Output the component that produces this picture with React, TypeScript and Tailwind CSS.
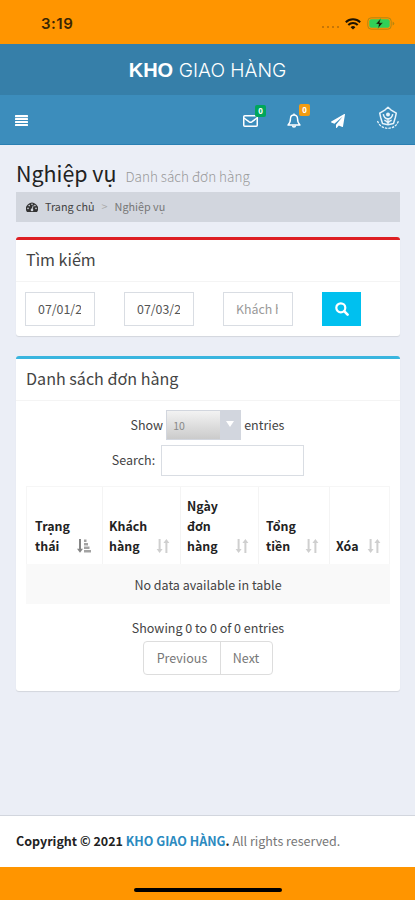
import type { ReactNode } from 'react'

const columns = [
  { lines: ['Trạng', 'thái'], width: 'w-[76px] pl-[8px] pr-[11px]', sorted: true },
  { lines: ['Khách', 'hàng'], width: 'w-[78px] pl-[6px] pr-[10px]', sorted: false },
  { lines: ['Ngày', 'đơn', 'hàng'], width: 'w-[78px] pl-[6px] pr-[9px]', sorted: false },
  { lines: ['Tổng', 'tiền'], width: 'w-[71px] pl-[7px] pr-[10px]', sorted: false },
  { lines: ['Xóa'], width: 'w-[61px] pl-[6px] pr-[10px]', sorted: false },
]

function StatusBar() {
  return (
    <div className="flex h-11 items-center bg-[#ff9500] pl-[41px] pr-[20px] pt-[3px]">
      <span className="flex-1 font-['Inter'] text-[15px] font-semibold leading-5 tracking-[0.5px] text-[#3a2604]">3:19</span>
      <div className="mr-[6px] mt-[7px] flex gap-[3px]">
        <i className="size-[2px] rounded-full bg-[#b56c08]" />
        <i className="size-[2px] rounded-full bg-[#b56c08]" />
        <i className="size-[2px] rounded-full bg-[#b56c08]" />
        <i className="size-[2px] rounded-full bg-[#b56c08]" />
      </div>
      <svg className="mr-[6px] h-[12px] w-[16px]" viewBox="0 0 16 12" fill="none" stroke="#1c1302" strokeWidth="2">
        <path d="M.8 4.3a10.3 10.3 0 0 1 14.4 0M3.3 7a6.7 6.7 0 0 1 9.4 0" />
        <path d="M8 11.6 5.6 9.2a3.4 3.4 0 0 1 4.8 0z" fill="#1c1302" stroke="none" />
      </svg>
      <svg className="h-[13px] w-[28px]" viewBox="0 0 28 13">
        <rect x=".8" y=".8" width="23.4" height="11.4" rx="3.4" fill="none" stroke="#b4860f" strokeWidth="1" />
        <rect x="2.3" y="2.3" width="20.4" height="8.4" rx="2" fill="#30d158" />
        <path d="M25.6 4.4q1.7.7 1.7 2.1t-1.7 2.1z" fill="#b4860f" />
        <path d="M13.7 1.4 8.8 7.1h3l-.9 4.5 5-5.8h-3.2z" fill="#1c1302" stroke="#30d158" strokeWidth=".5" />
      </svg>
    </div>
  )
}

function NavIcon({ children, badge, color }: { children: ReactNode; badge?: string; color?: string }) {
  return (
    <div className="relative flex w-[44px] justify-center">
      {children}
      {badge && (
        <span
          className={`absolute -top-[9px] left-[27px] flex h-[12px] w-[11px] items-center justify-center rounded-[2px] font-['Noto_Sans'] text-[8px] font-bold leading-none text-white ${color}`}
        >
          {badge}
        </span>
      )}
    </div>
  )
}

function Navbar() {
  return (
    <nav className="flex h-[50px] items-center border-b border-[#2a7fb2] bg-[#3c8dbc] pl-[15px] pt-[2px]">
      <svg className="h-[11px] w-[13px]" viewBox="0 0 13 11" fill="#fff">
        <rect width="13" height="2.2" rx=".5" />
        <rect y="3" width="13" height="2.1" rx=".5" />
        <rect y="6" width="13" height="2.1" rx=".5" />
        <rect y="8.9" width="13" height="2.1" rx=".5" />
      </svg>
      <div className="ml-auto flex items-center">
        <NavIcon badge="0" color="bg-[#00a65a]">
          <svg className="mt-px h-[12px] w-[15px]" viewBox="0 0 15 12" fill="none" stroke="#fff" strokeWidth="1.5">
            <rect x=".75" y=".75" width="13.5" height="10.500" rx="1" />
            <path d="M1 3 6.200 6.800q1.300.9 2.600 0L14 3" />
          </svg>
        </NavIcon>
        <NavIcon badge="0" color="bg-[#f39c12]">
          <svg className="h-[15px] w-[14px]" viewBox="0 0 14 15" fill="none" stroke="#fff" strokeWidth="1.4">
            <path d="M7 2C4.8 2 3.5 3.7 3.5 5.6c0 3.4-.9 5-2.5 6.4h12c-1.6-1.4-2.5-3-2.5-6.4C10.5 3.7 9.2 2 7 2z" strokeLinejoin="round" />
            <path d="M7 .4V2M5.5 12.5a1.5 1.5 0 0 0 3 0" />
          </svg>
        </NavIcon>
        <NavIcon>
          <svg className="h-[14px] w-[14px]" viewBox="0 0 1792 1792" fill="#fff">
            <path d="M1764 11q33 24 27 64l-256 1536q-5 29-32 45-14 8-31 8-11 0-24-5l-453-185-242 295q-18 23-49 23-13 0-22-4-19-7-30.5-23.5t-11.5-36.5v-349l864-1059-1069 925-395-162q-37-14-40-55-2-40 32-59l1664-960q15-9 32-9 20 0 36 11z" />
          </svg>
        </NavIcon>
        <div className="flex w-[55px] justify-center">
          <svg className="-mt-[5px] h-[24px] w-[24px]" viewBox="0 0 24 24" fill="none" stroke="#e8f4fb" strokeLinejoin="round">
            <path d="M12 1.200 14.800 3.800 20.300 7.200 19.300 11.500 17.500 17.500 12 18.700 6.500 17.500 4.700 11.500 3.700 7.200 9.200 3.800z" strokeWidth="1.500" />
            <path d="M12 18.500V12M7.300 8.200q.6 4.300 4.700 5 4.100-.7 4.700-5M8.300 14.200q2 .4 3.700 2.500 1.700-2.100 3.700-2.500" strokeWidth="1.500" />
            <circle cx="12" cy="8.500" r="2" fill="#e8f4fb" stroke="none" />
            <path d="M1.500 15C3.300 19.700 7 22.300 12 22.300s8.700-2.600 10.500-7.300" strokeWidth="1.300" strokeDasharray="2.500 1" />
          </svg>
        </div>
      </div>
    </nav>
  )
}

function SortIcon({ sorted }: { sorted: boolean }) {
  if (sorted) {
    return (
      <svg className="h-[14px] w-[14px]" viewBox="0 0 14 14">
        <path d="M2 0h2v9.800h2L3 13.800 0 9.800h2z" fill="#858585" />
        <path d="M7 .5h2.500v2.500H7zM7 4h4v2.500H7zM7 7.500h5.500V10H7zM7 11h7v2.500H7z" fill="#a3a3a3" />
      </svg>
    )
  }
  return (
    <svg className="h-[14px] w-[14px]" viewBox="0 0 14 14" fill="#cfcfcf">
      <path d="M2.6 0h2v10h2l-3 4-3-4h2zM9.400 14h2V4h2l-3-4-3 4h2z" />
    </svg>
  )
}

function Box({ title, accent, children }: { title: string; accent: string; children: ReactNode }) {
  return (
    <section className={`rounded-[3px] border-t-[3px] bg-white shadow-[0_1px_1px_rgba(0,0,0,0.1)] ${accent}`}>
      <h3 className="border-b border-[#f4f4f4] py-[9px] pl-[10px] pb-[12px] text-[16.1px] leading-[20px] text-[#444]">{title}</h3>
      {children}
    </section>
  )
}

function SearchBox() {
  return (
    <Box title="Tìm kiếm" accent="border-[#dd1f23]">
      <div className="flex h-[54px] gap-[29px] pl-[9px] pt-[10px] text-[12.4px] text-[#555]">
        <input className="h-[34px] w-[70px] border border-[#d9dde3] pl-[12px] pr-[13px]" defaultValue="07/01/2021" />
        <input className="h-[34px] w-[70px] border border-[#d9dde3] pl-[12px] pr-[13px]" defaultValue="07/03/2021" />
        <input
          className="h-[34px] w-[70px] border border-[#d9dde3] pl-[12px] pr-[14px] placeholder:text-[#999]"
          placeholder="Khách hàng"
        />
        <button className="flex h-[34px] w-[39px] items-center justify-center bg-[#00c0ef]">
          <svg className="size-[14px]" viewBox="0 0 14 14" fill="none" stroke="#fff" strokeLinecap="round">
            <circle cx="5.8" cy="5.8" r="4.5" strokeWidth="2.2" />
            <path d="m9.4 9.4 3.2 3.2" strokeWidth="2.6" />
          </svg>
        </button>
      </div>
    </Box>
  )
}

function OrdersTable() {
  return (
    <div className="mx-[10px] mt-[10px]">
      <div className="flex h-[78px] border border-b-0 border-[#f6f6f6]">
        {columns.map((col) => (
          <div
            key={col.lines[0]}
            className={`flex shrink-0 items-end justify-between border-r border-[#f4f4f4] pb-[8px] last:border-r-0 ${col.width}`}
          >
            <div className="text-[12.4px] font-bold leading-[20px] text-[#222]">
              {col.lines.map((line) => (
                <div key={line}>{line}</div>
              ))}
            </div>
            <div className="mb-[3px]">
              <SortIcon sorted={col.sorted} />
            </div>
          </div>
        ))}
      </div>
      <div className="h-[40px] bg-[#f9f9f9] text-center leading-[42px]">No data available in table</div>
    </div>
  )
}

function OrdersBox() {
  return (
    <Box title="Danh sách đơn hàng" accent="border-[#39b5df]">
      <div className="h-[290px] pt-[9px] text-[12.5px] text-[#444]">
        <div className="flex h-[30px] items-center justify-center gap-[3px] pr-px">
          <span>Show</span>
          <div className="flex h-[30px] w-[75px] border border-[#d2d6de] bg-linear-to-b from-[#f3f3f3] to-[#cbcbcb]">
            <span className="flex-1 pl-[6px] text-[10.5px] leading-[29px] text-[#888]">10</span>
            <span className="flex w-[20px] justify-center bg-[#d2d6de] pt-[10px]">
              <svg className="h-[6px] w-[8px]" viewBox="0 0 8 6" fill="#fff">
                <path d="M0 0h8L4 6z" />
              </svg>
            </span>
          </div>
          <span>entries</span>
        </div>
        <div className="mt-[5px] flex h-[31px] items-center justify-center gap-[6px]">
          <span>Search:</span>
          <input className="h-[31px] w-[143px] border border-[#d9dde3]" />
        </div>
        <OrdersTable />
        <div className="mt-[14px] text-center leading-[20px]">Showing 0 to 0 of 0 entries</div>
        <div className="mx-auto mt-[3px] flex h-[34px] w-[130px] rounded-[4px] border border-[#ddd] text-[#777]">
          <span className="w-[77px] border-r border-[#ddd] text-center leading-[32px]">Previous</span>
          <span className="flex-1 pr-px text-center leading-[32px]">Next</span>
        </div>
      </div>
    </Box>
  )
}

export default function App() {
  return (
    <div className="flex h-[900px] w-[415px] flex-col overflow-hidden bg-[#ebeef6] font-['Noto_Sans_CJK_SC','Noto_Sans',sans-serif]">
      <StatusBar />
      <header>
        <div className="h-[51px] bg-[#367fa9] text-center font-['Liberation_Sans',sans-serif] text-[20px] leading-[53px] text-white">
          <b>KHO</b> <span className="font-['Inter'] text-[19.2px] font-light">GIAO HÀNG</span>
        </div>
        <Navbar />
      </header>
      <main className="flex-1 pl-[16px] pr-[15px] pt-[13px]">
        <h1 className="flex h-[34px] items-baseline gap-[9px] whitespace-nowrap text-[21.4px] leading-[30px] text-[#222]">
          Nghiệp vụ
          <small className="text-[13.5px] font-light text-[#999]">Danh sách đơn hàng</small>
        </h1>
        <div className="flex h-[30px] items-center bg-[#d2d6de] pb-px pl-[10px] text-[10.8px] text-[#444]">
          <svg className="mr-[7px] h-[10px] w-[12px]" viewBox="0 0 12 10">
            <path d="M1 10a6 6 0 1 1 10 0z" fill="#333" />
            <path d="M6 7.8 7.2 3.5" stroke="#d2d6de" strokeWidth=".9" />
            <g fill="#d2d6de">
              <circle cx="6" cy="7.9" r="1.3" />
              <circle cx="2" cy="6.4" r=".8" />
              <circle cx="3.2" cy="3.6" r=".8" />
              <circle cx="6" cy="2.3" r=".8" />
              <circle cx="8.9" cy="3.6" r=".8" />
              <circle cx="10" cy="6.4" r=".8" />
            </g>
          </svg>
          <span>Trang chủ</span>
          <span className="mx-[7px] text-[#aaa]">&gt;</span>
          <span className="text-[#777]">Nghiệp vụ</span>
        </div>
        <div className="mt-[15px] flex flex-col gap-[20px]">
          <SearchBox />
          <OrdersBox />
        </div>
      </main>
      <footer className="h-[52px] border-t border-[#d2d6de] bg-white pl-[16px] text-[12.5px] leading-[50px] text-[#777]">
        <b className="text-[#222]">
          Copyright © 2021 <span className="text-[#2b8abf]">KHO GIAO HÀNG</span>.
        </b>{' '}
        All rights reserved.
      </footer>
      <div className="flex h-[33px] justify-center bg-[#ff9500] pt-[21px]">
        <div className="h-[4px] w-[148px] rounded-full bg-black" />
      </div>
    </div>
  )
}
